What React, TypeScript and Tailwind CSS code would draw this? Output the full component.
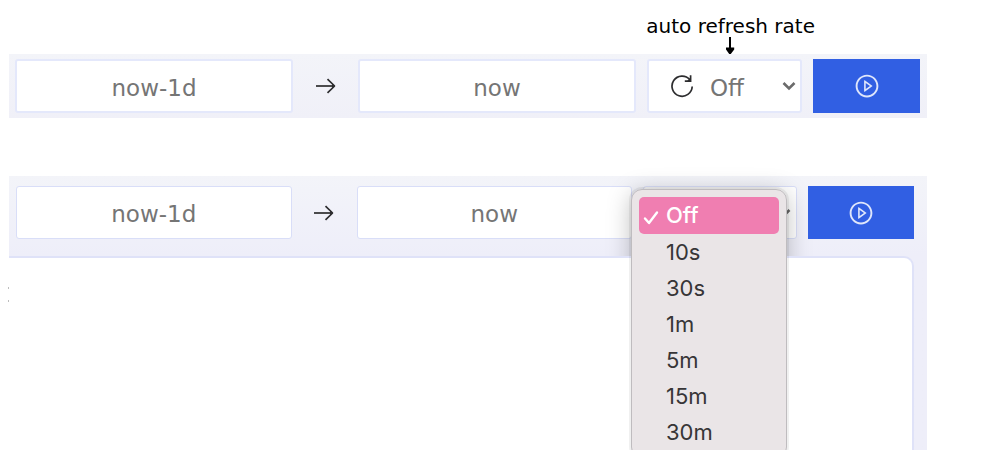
import { useState } from 'react'
import { AiOutlinePlayCircle } from 'react-icons/ai'
import { clsx } from 'clsx'

const RATES = ['Off', '10s', '30s', '1m', '5m', '15m', '30m']

const field =
  'min-w-0 rounded-[3px] bg-white pt-1 text-[23px] placeholder:text-[#757575] outline-none'

function ArrowIcon() {
  return (
    <svg viewBox="0 0 20 16" className="h-4 w-5" fill="none" stroke="currentColor" strokeWidth="1.7">
      <path d="M0 8h18" />
      <path d="M11.5 1.2 18.6 8l-7.1 6.8" strokeLinejoin="bevel" />
      <path d="M16 5.5 18.8 8 16 10.5z" fill="currentColor" stroke="none" />
    </svg>
  )
}

function ReloadIcon({ className }: { className?: string }) {
  return (
    <svg viewBox="0 0 24 24" className={clsx('size-6', className)} fill="none" stroke="currentColor" strokeWidth="1.7">
      <path d="M22.2 12.5A10.1 10.1 0 1 1 19.8 5.6" />
      <path d="M20.6 1.2v5.9h-5.8" />
      <path d="M20.6 3.6v3.5h-3.4z" fill="currentColor" stroke="none" />
    </svg>
  )
}

function RateMenu({ value, onSelect }: { value: string; onSelect: (rate: string) => void }) {
  return (
    <>
      {/* the panel below covers the lower part of this shadow */}
      <div className="absolute top-[3px] -left-3 h-[300px] w-[156px] rounded-[11px] shadow-[0_4px_24px_rgba(0,0,0,0.26)]" />
      <div
        role="listbox"
        aria-label="Refresh rate options"
        className="absolute top-[3px] -left-3 z-20 w-[156px] rounded-[11px] border border-[#bfbcbf] bg-[#eae5e7] px-[7px] py-[7px] font-[Inter,sans-serif] shadow-[0_0_0_2px_rgba(0,0,0,0.06)]"
      >
        {RATES.map((rate) => (
          <button
            key={rate}
            type="button"
            role="option"
            aria-selected={rate === value}
            onClick={() => onSelect(rate)}
            className={clsx(
              'flex w-full items-center rounded-[5px] pl-1 text-[22px]',
              rate === value ? 'h-[37px] bg-[#f07eb1] font-medium text-white' : 'h-[36px] text-[#373537]',
            )}
          >
            <span className="flex w-[23px] shrink-0">
              {rate === value && (
                <svg viewBox="0 0 16 16" className="mt-1 size-4" fill="none" stroke="currentColor" strokeWidth="2.4" strokeLinecap="round" strokeLinejoin="round">
                  <path d="M2 8.5 6 13 14 2.5" />
                </svg>
              )}
            </span>
            {rate}
          </button>
        ))}
      </div>
    </>
  )
}

type TimeBarProps = {
  id: string
  open?: boolean
  className?: string
}

function TimeBar({ id, open = false, className }: TimeBarProps) {
  const [rate, setRate] = useState('Off')
  const border = open ? 'border border-[#d9def8]' : 'border-2 border-[#e4e8fb]'

  return (
    <form className={clsx('flex items-stretch', className)} onSubmit={(e) => e.preventDefault()}>
      <input aria-label="From" placeholder="now-1d" className={clsx(field, border, 'flex-1 text-center')} />
      <div className="flex w-[65px] items-center justify-center text-[#2d2d2f]">
        <ArrowIcon />
      </div>
      <input aria-label="To" placeholder="now" className={clsx(field, border, 'flex-1 text-center')} />
      <div className={clsx('relative mx-[11px] flex', open ? 'w-[154px]' : 'w-[155px]')}>
        <label htmlFor={id} className="sr-only">
          Auto refresh rate
        </label>
        <select
          id={id}
          value={rate}
          onChange={(e) => setRate(e.target.value)}
          className={clsx(field, border, 'w-full appearance-none pl-[61px]', open ? 'text-transparent' : 'text-[#757575]')}
        >
          {RATES.map((r) => (
            <option key={r}>{r}</option>
          ))}
        </select>
        <ReloadIcon className="pointer-events-none absolute inset-y-0 left-[23px] my-auto text-[#2d2d2f]" />
        <svg
          viewBox="0 0 14 10"
          className="pointer-events-none absolute inset-y-0 right-[6px] my-auto h-[10px] w-[14px] text-[#6b6b6b]"
          fill="none"
          stroke="currentColor"
          strokeWidth="2.6"
        >
          <path d="M1.5 2 7 7.5 12.5 2" />
        </svg>
        {open && <RateMenu value={rate} onSelect={setRate} />}
      </div>
      <button
        type="submit"
        aria-label="Run query"
        className={clsx('relative z-10 flex items-center justify-center bg-[#315fe3] text-[#dfe6fb]', open ? 'w-[106px]' : 'w-[107px]')}
      >
        <AiOutlinePlayCircle size={26} />
      </button>
    </form>
  )
}

export default function App() {
  return (
    <main className="flex h-screen flex-col overflow-hidden bg-white pr-[73px] pl-[9px] font-['DejaVu_Sans',sans-serif]">
      <div className="flex h-[54px] shrink-0 justify-end pt-[15px] pr-[112px] text-black">
        <div className="flex flex-col items-center">
          <p className="text-[20px] leading-[22px]">auto refresh rate</p>
          <svg viewBox="0 0 10 17" className="h-[17px] w-[10px] shrink-0" fill="currentColor">
            <path d="M3 0h2v10.5h3.2V12.5L4.8 17h-1.6L0 12.5v-2h3z" />
          </svg>
        </div>
      </div>

      <section className="bg-linear-to-b from-[#f3f4f9] to-[#f0f0f8] pt-[5px] pr-[7px] pb-[5px] pl-[6px]">
        <TimeBar id="rate" className="h-[54px]" />
      </section>

      <section className="mt-[58px] flex flex-1 flex-col bg-linear-to-b from-[#f3f4f9] to-[#eeeef9] to-[80px] pt-[10px] pr-[13px]">
        <TimeBar id="rate-open" open className="h-[53px] pl-[7px]" />
        <div className="relative z-10 mt-[17px] flex-1 rounded-tr-[10px] border-t-2 border-r-2 border-[#dfe2f8] bg-white pt-[29px]">
          <div className="-ml-px flex w-px flex-col gap-[11px]">
            <span className="h-[2px] bg-[#bdbdbd]" />
            <span className="h-[2px] bg-[#bdbdbd]" />
          </div>
        </div>
      </section>
    </main>
  )
}
